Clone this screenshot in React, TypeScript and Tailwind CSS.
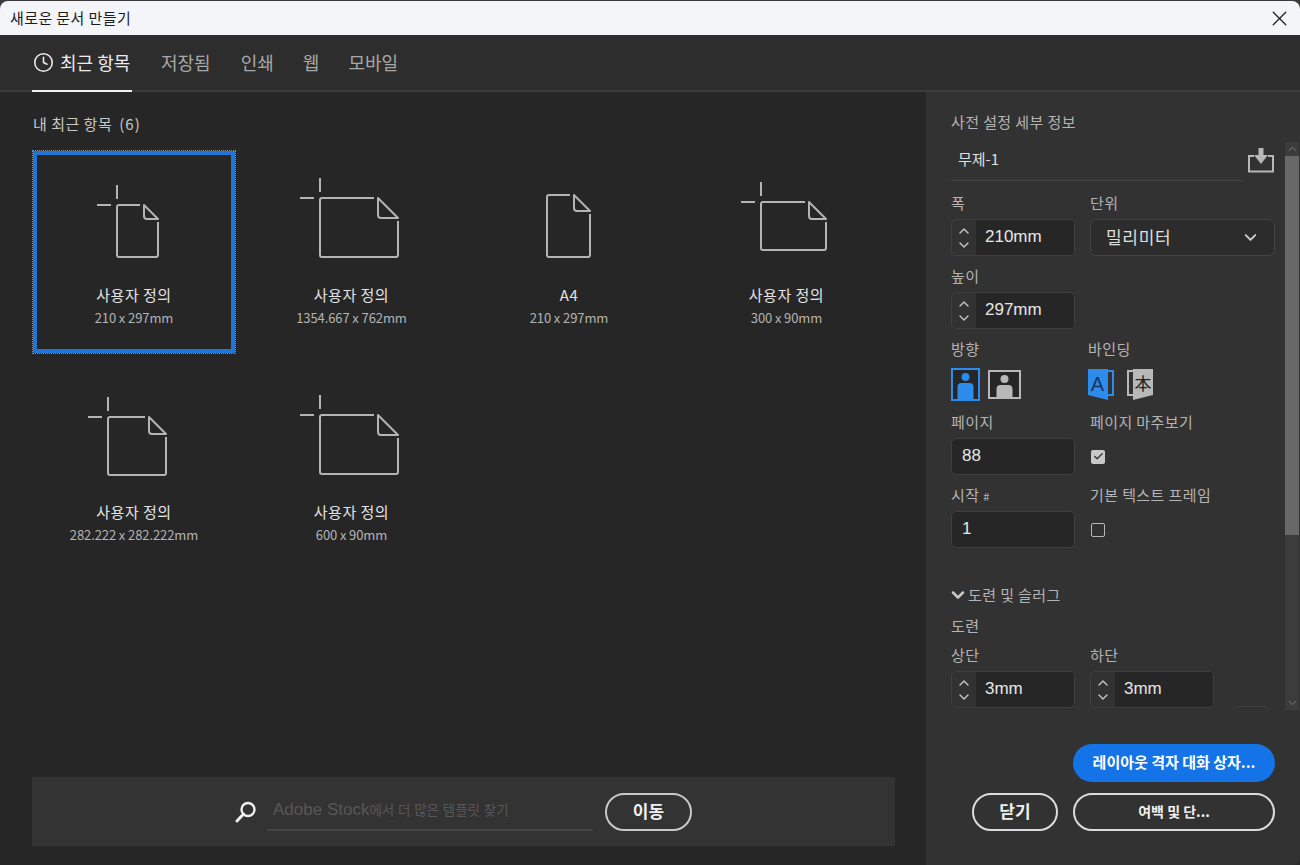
import { Clock, X, ChevronUp, ChevronDown, Check } from "lucide-react";
import type { ReactNode } from "react";

interface Preset {
  title: string;
  size: string;
  x: number;
  y: number;
  w: number;
  h: number;
  fold: number;
  cross?: boolean;
  selected?: boolean;
}

const presets: Preset[] = [
  { title: "사용자 정의", size: "210 x 297mm", x: 80, y: 50, w: 41, h: 52, fold: 14, cross: true, selected: true },
  { title: "사용자 정의", size: "1354.667 x 762mm", x: 65, y: 43, w: 78, h: 59, fold: 20, cross: true },
  { title: "A4", size: "210 x 297mm", x: 75, y: 40, w: 43, h: 62, fold: 16 },
  { title: "사용자 정의", size: "300 x 90mm", x: 71, y: 47, w: 65, h: 48, fold: 17, cross: true },
  { title: "사용자 정의", size: "282.222 x 282.222mm", x: 71, y: 45, w: 58, h: 58, fold: 17, cross: true },
  { title: "사용자 정의", size: "600 x 90mm", x: 65, y: 43, w: 78, h: 59, fold: 20, cross: true },
];

function DocIcon({ x, y, w, h, fold, cross }: Preset) {
  const r = x + w;
  const b = y + h;
  const body = `M${r} ${y + fold + 3}V${b - 2}a2 2 0 0 1-2 2H${x + 2}a2 2 0 0 1-2-2V${y + 2}a2 2 0 0 1 2-2H${r - fold - 4}`;
  const flap = `M${r - fold} ${y}L${r} ${y + fold}H${r - fold + 3}a3 3 0 0 1-3-3Z`;
  return (
    <svg width="194" height="124" viewBox="0 0 194 124" className="block" fill="none" stroke="#b4b4b4" strokeWidth="2" strokeLinejoin="round">
      <path d={body} />
      <path d={flap} />
      {cross && (
        <>
          <path d={`M${x - 20} ${y}H${x - 6}`} />
          <path d={`M${x} ${y - 20}V${y - 6}`} />
        </>
      )}
    </svg>
  );
}

function PresetCard(p: Preset) {
  return (
    <div
      className={`w-[202px] h-[202px] flex flex-col items-center border-[4px] ${
        p.selected ? "border-[#1f76d8] outline-1 outline-dotted outline-[#4a9af0]" : "border-transparent"
      }`}
    >
      <DocIcon {...p} />
      <div className="mt-[4px] text-[15px] tracking-[0.5px] leading-[24px] text-[#e4e4e4]">{p.title}</div>
      <div className="text-[13px] leading-[22px] text-[#b4b4b4] tracking-[-0.1px]">{p.size}</div>
    </div>
  );
}

function Label({ children }: { children: ReactNode }) {
  return <div className="h-6 mb-1 text-[15px] tracking-[0.4px] leading-6 text-[#b4b4b4]">{children}</div>;
}

function Stepper({ value }: { value: string }) {
  return (
    <div className="w-[124px] h-[37px] flex rounded-[5px] border border-[#3f3f3f] overflow-hidden">
      <div className="w-[24px] flex flex-col items-center justify-center text-[#c8c8c8]">
        <ChevronUp size={16} strokeWidth={2} className="-mb-[1px]" />
        <ChevronDown size={16} strokeWidth={2} className="-mt-[1px]" />
      </div>
      <div className="flex-1 bg-[#262626] pl-[9px] font-['Liberation_Sans',sans-serif] text-[17px] leading-[33px] text-[#e6e6e6]">
        {value}
      </div>
    </div>
  );
}

function PlainField({ value }: { value: string }) {
  return (
    <div className="w-[124px] h-[37px] rounded-[5px] border border-[#3f3f3f] bg-[#262626] pl-[10px] font-['Liberation_Sans',sans-serif] text-[17px] leading-[33px] text-[#e6e6e6]">
      {value}
    </div>
  );
}

function Person({ cx, top, bottom }: { cx: number; top: number; bottom: number }) {
  return (
    <>
      <circle cx={cx} cy={top + 4} r={4} />
      <path d={`M${cx - 8} ${bottom}V${top + 14}a4 4 0 0 1 4-4h8a4 4 0 0 1 4 4V${bottom}Z`} />
    </>
  );
}

function SaveIcon() {
  return (
    <svg width="26" height="25" viewBox="0 0 26 25" className="block">
      <path d="M6 8H1V23.500H25V8H20" fill="none" stroke="#b8b8b8" strokeWidth="2" />
      <path d="M10.500 0H15.500V7H20L13 16L6 7H10.500Z" fill="#b8b8b8" />
    </svg>
  );
}

function BindingLeft() {
  return (
    <svg width="26" height="32" viewBox="0 0 26 32" className="block">
      <path d="M20 3H25V27H20" fill="none" stroke="#2d8ceb" strokeWidth="2" />
      <path d="M0 1H20V32L0 27Z" fill="#2d8ceb" />
      <text x="9.500" y="23" textAnchor="middle" fontFamily="Liberation Sans, sans-serif" fontSize="20" fill="#14365f">
        A
      </text>
    </svg>
  );
}

function BindingRight() {
  return (
    <svg width="26" height="32" viewBox="0 0 26 32" className="block">
      <path d="M6 3H1V27H6" fill="none" stroke="#b8b8b8" strokeWidth="2" />
      <path d="M6 1H26V27L6 32Z" fill="#b8b8b8" />
      <text x="16" y="22" textAnchor="middle" fontFamily="Noto Sans CJK KR, sans-serif" fontSize="17" fill="#222222">
        本
      </text>
    </svg>
  );
}

export default function App() {
  return (
    <div className="w-[1300px] h-[865px] overflow-hidden bg-[#2b2b2b] font-['Noto_Sans_CJK_KR',sans-serif] flex flex-col">
      <div className="h-[35px] shrink-0 pt-[1px] bg-[#3a3a3a]">
        <div className="h-[34px] rounded-t-[8px] bg-[#f3f5f9] flex items-center justify-between pl-[10px] pr-[8px]">
          <span className="text-[15px] tracking-[0.4px] text-[#1c1c1c]">새로운 문서 만들기</span>
          <X size={25} strokeWidth={1.3} className="text-[#222222]" />
        </div>
      </div>

      <div className="h-[57px] shrink-0 flex px-[32px] gap-[30px] bg-[#2d2d2d] border-b-2 border-[#3b3b3b]">
        <div className="w-[100px] -mr-[1px] h-[57px] flex items-center gap-[6px] pl-[1px] border-b-2 border-[#f0f0f0] text-[#ececec] text-[18px]">
          <Clock size={21} strokeWidth={1.8} />
          <span>최근 항목</span>
        </div>
        <div className="flex items-center text-[18px] text-[#a8a8a8]">저장됨</div>
        <div className="flex items-center text-[18px] text-[#a8a8a8]">인쇄</div>
        <div className="flex items-center -ml-[1px] text-[18px] text-[#a8a8a8]">웹</div>
        <div className="flex items-center -ml-[1px] text-[18px] text-[#a8a8a8]">모바일</div>
      </div>

      <div className="flex-1 flex min-h-0">
        <main className="w-[926px] bg-[#262626] pl-[33px] pr-[31px] flex flex-col">
          <div className="h-[59px] pt-[20px] text-[15px] tracking-[0.5px] leading-[24px] text-[#c8c8c8]">
            내 최근 항목<span className="ml-[7px] tracking-[1px]">(6)</span>
          </div>
          <div className="grid grid-cols-[202px_202px_202px_202px] gap-x-[15.500px] gap-y-[15px]">
            {presets.map((p, i) => (
              <PresetCard key={i} {...p} />
            ))}
          </div>
          <div className="mt-auto mb-[19px] -ml-[1px] h-[69px] bg-[#333333] flex items-center justify-center">
            <svg width="22" height="22" viewBox="0 0 22 22" className="block mr-[10px]" fill="none" stroke="#f0f0f0" strokeWidth="2.400">
              <circle cx="13" cy="8.500" r="6.500" />
              <path d="M8.500 13L2 20" strokeLinecap="round" strokeWidth="3" />
            </svg>
            <div className="w-[326px] h-[38px] border-b-2 border-[#444444] pl-[6px] font-['Liberation_Sans','Noto_Sans_CJK_KR',sans-serif] text-[17px] leading-[34px] text-[#575757]">
              Adobe Stock<span className="text-[13.500px]">에서 더 많은 템플릿 찾기</span>
            </div>
            <button className="ml-[12px] w-[87px] h-[38px] pb-[2px] rounded-full border-2 border-[#c8c8c8] text-[17px] font-bold text-[#f0f0f0]">
              이동
            </button>
          </div>
        </main>

        <aside className="flex-1 bg-[#323232] rounded-br-[8px] flex flex-col">
          <div className="h-[50px] pt-[18px] pl-[25px] text-[15px] tracking-[0.4px] leading-[24px] text-[#b4b4b4]">사전 설정 세부 정보</div>

          <div className="h-[568px] flex">
            <div className="w-[359px] pl-[25px] overflow-hidden">
              <div className="h-[49px] flex items-start">
                <div className="w-[291px] h-[39px] border-b border-[#454545] pl-[7px] pt-[5px] text-[15px] leading-[24px] text-[#e0e0e0]">무제-1</div>
                <div className="ml-[6px] mt-[6px]">
                  <SaveIcon />
                </div>
              </div>

              <div className="grid grid-cols-[124px_185px] gap-x-[15px]">
                <div className="h-[73px]">
                  <Label>폭</Label>
                  <Stepper value="210mm" />
                </div>
                <div className="h-[73px]">
                  <Label>단위</Label>
                  <div className="h-[37px] rounded-[6px] border border-[#444444] bg-[#2c2c2c] flex items-center justify-between pl-[15px] pr-[14px] pb-[1px]">
                    <span className="text-[17px] tracking-[0.7px] text-[#e0e0e0]">밀리미터</span>
                    <ChevronDown size={19} strokeWidth={2.4} className="text-[#d0d0d0]" />
                  </div>
                </div>

                <div className="h-[73px]">
                  <Label>높이</Label>
                  <Stepper value="297mm" />
                </div>
                <div className="h-[73px]" />

                <div className="h-[73px]">
                  <div className="h-6 mb-[7px] text-[15px] tracking-[0.4px] leading-6 text-[#b4b4b4]">방향</div>
                  <div className="flex items-center gap-[8px]">
                    <svg width="29" height="33" viewBox="0 0 29 33" className="block">
                      <rect x="1" y="1" width="27" height="31" fill="#262626" stroke="#2d8ceb" strokeWidth="2" />
                      <g fill="#2d8ceb">
                        <Person cx={14.5} top={5} bottom={31} />
                      </g>
                    </svg>
                    <svg width="33" height="29" viewBox="0 0 33 29" className="block">
                      <rect x="1" y="1" width="31" height="27" fill="#262626" stroke="#b8b8b8" strokeWidth="2" />
                      <g fill="#b8b8b8">
                        <Person cx={16.5} top={5} bottom={27} />
                      </g>
                    </svg>
                  </div>
                </div>
                <div className="h-[73px] -ml-[2px]">
                  <div className="h-6 mb-[7px] text-[15px] tracking-[0.4px] leading-6 text-[#b4b4b4]">바인딩</div>
                  <div className="flex items-center gap-[13px]">
                    <BindingLeft />
                    <BindingRight />
                  </div>
                </div>

                <div className="h-[73px]">
                  <Label>페이지</Label>
                  <PlainField value="88" />
                </div>
                <div className="h-[73px]">
                  <Label>페이지 마주보기</Label>
                  <div className="h-[37px] flex items-center pl-[1px]">
                    <div className="w-[14px] h-[14px] rounded-[2px] bg-[#c8c8c8] flex items-center justify-center">
                      <Check size={11} strokeWidth={3} className="text-[#333333]" />
                    </div>
                  </div>
                </div>

                <div className="h-[73px]">
                  <Label>
                    시작 <span className="text-[11px]">#</span>
                  </Label>
                  <PlainField value="1" />
                </div>
                <div className="h-[73px]">
                  <Label>기본 텍스트 프레임</Label>
                  <div className="h-[37px] flex items-center pl-[1px]">
                    <div className="w-[14px] h-[14px] rounded-[2px] border-[1.500px] border-[#b8b8b8]" />
                  </div>
                </div>
              </div>

              <div className="mt-[27px] h-6 flex items-center text-[15px] tracking-[0.4px] text-[#b4b4b4]">
                <ChevronDown size={20} strokeWidth={3} className="text-[#c8c8c8] -ml-[3px]" />
                <span>도련 및 슬러그</span>
              </div>
              <div className="mt-[7px] h-6 text-[15px] tracking-[0.4px] leading-6 text-[#b4b4b4]">도련</div>

              <div className="mt-[5px] flex gap-[15px]">
                <div>
                  <Label>상단</Label>
                  <Stepper value="3mm" />
                </div>
                <div>
                  <Label>하단</Label>
                  <Stepper value="3mm" />
                </div>
                <div className="mt-[63px] ml-[3px] w-[37px] h-[37px] shrink-0 rounded-[5px] border border-[#3f3f3f]" />
              </div>
            </div>

            <div className="w-[14px] bg-[#3c3c3c] flex flex-col items-center">
              <ChevronUp size={13} strokeWidth={1.5} className="h-[14px] text-[#8a8a8a]" />
              <div className="w-full h-[379px] bg-[#686868]" />
              <ChevronDown size={13} strokeWidth={1.5} className="mt-auto h-[14px] text-[#8a8a8a]" />
            </div>
          </div>

          <div className="mt-[34px] pr-[25px] flex flex-col items-end gap-[11px]">
            <button className="w-[202px] h-[38px] pb-[2px] rounded-full bg-[#1473e6] text-[15px] font-bold text-white">레이아웃 격자 대화 상자...</button>
            <div className="flex gap-[15px]">
              <button className="w-[86px] h-[38px] pb-[2px] rounded-full border-2 border-[#dcdcdc] text-[17px] font-bold text-[#f0f0f0]">닫기</button>
              <button className="w-[202px] h-[38px] pb-[2px] rounded-full border-2 border-[#dcdcdc] text-[14px] font-bold text-[#f0f0f0]">여백 및 단...</button>
            </div>
          </div>
        </aside>
      </div>
    </div>
  );
}
